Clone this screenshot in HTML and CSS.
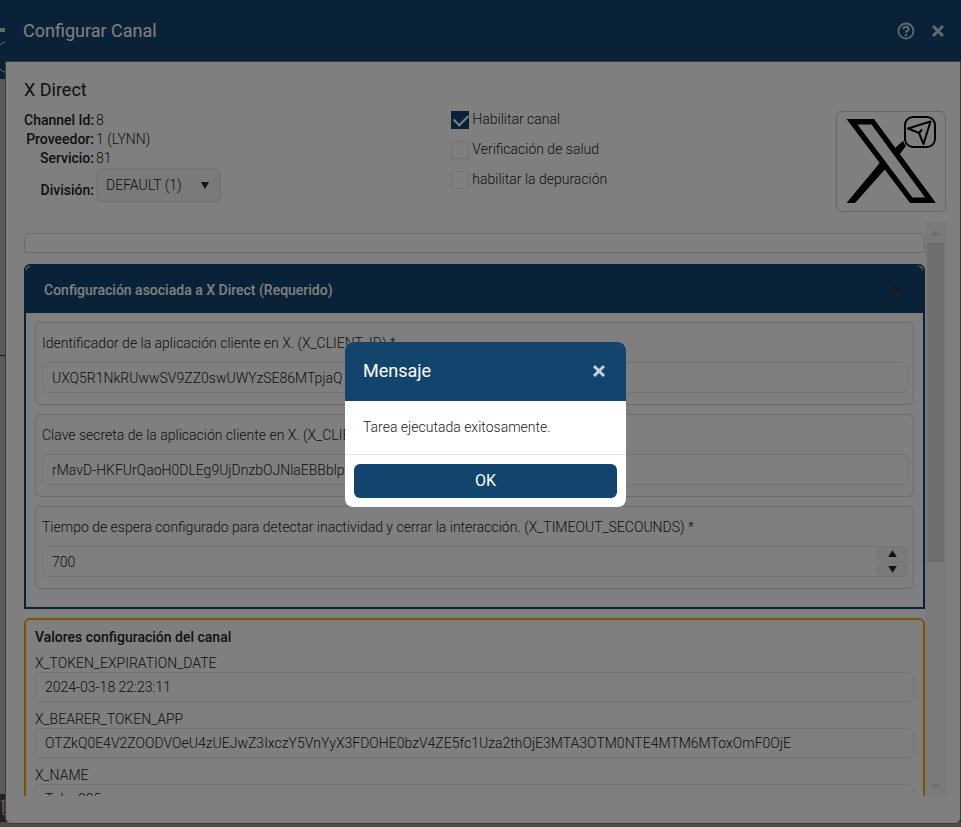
FILE: index.html
```html
<!DOCTYPE html>
<html lang="es">
<head>
    <meta charset="utf-8">
    <title>Configurar Canal</title>
    <link rel="stylesheet" href="styles.css">
</head>
<body>
<div class="app">
    <div class="app-header">
        <svg class="app-logo" width="5" height="60" viewBox="0 0 5 60">
            <path d="M0 10H5" stroke="#ccc" stroke-width="4"/>
            <path d="M0 25Q2 22 5 22M0 49Q2 52 5 52" stroke="#ccc" fill="none"/>
        </svg>
    </div>
    <div class="app-side"></div>
    <div class="app-main"></div>
    <div class="app-footer">
        <svg width="5" height="28" viewBox="0 0 5 28">
            <path d="M1 7H5M3 7V18Q3 21 5 21" stroke="#fff" stroke-width="1" fill="none"/>
            <path d="M4.500 9V18" stroke="#a86a5a" fill="none"/>
        </svg>
    </div>
</div>

<div class="window">
    <div class="window-header">
        <h1>Configurar Canal</h1>
        <div class="window-actions">
            <button type="button" class="icon-btn" aria-label="Ayuda">
                <svg width="18" height="18" viewBox="0 0 18 18" fill="none" stroke="currentColor">
                    <circle cx="9" cy="9" r="7.500" stroke-width="1.800"/>
                    <path d="M6.500 7.200C6.500 4 11.600 4 11.600 7C11.600 8.900 9 8.800 9 10.800" stroke-width="2.200"/>
                    <path d="M9 12V14" stroke-width="2.400"/>
                </svg>
            </button>
            <button type="button" class="icon-btn" aria-label="Cerrar">
                <svg width="14" height="14" viewBox="0 0 14 14" stroke="currentColor" stroke-width="3">
                    <path d="M2 2L12 12M12 2L2 12"/>
                </svg>
            </button>
        </div>
    </div>
    <div class="window-body">
        <h2>X Direct</h2>
        <div class="summary">
            <dl class="details">
                <dt>Channel Id:</dt><dd>8</dd>
                <dt>Proveedor:</dt><dd>1 (LYNN)</dd>
                <dt>Servicio:</dt><dd>81</dd>
                <dt class="tall"><label for="division">División:</label></dt>
                <dd class="select-wrap">
                    <select id="division"><option>DEFAULT (1)</option></select>
                </dd>
            </dl>
            <div class="checks">
                <div><input type="checkbox" id="check-enable" checked><label for="check-enable">Habilitar canal</label></div>
                <div><input type="checkbox" id="check-health"><label for="check-health">Verificación de salud</label></div>
                <div><input type="checkbox" id="check-debug"><label for="check-debug">habilitar la depuración</label></div>
            </div>
            <div class="channel-logo">
                <svg width="108" height="99" viewBox="0 0 108 99" fill="none" stroke="#000">
                    <path d="M9.500 7H37L99 91H73Z M20.500 12.500L75.500 85.500H88L34.500 12.500Z" fill="#000" fill-rule="evenodd" stroke="none"/>
                    <path d="M46 47L51 54L18 91H9.500Z M58 36L66 29L69 34L62 43Z" fill="#000" stroke="none"/>
                    <rect x="68" y="5" width="30" height="30" rx="8" stroke-width="2"/>
                    <path d="M93.500 9.500L71 16.500L82 21L86.500 32Z M82 21L85 17.500" stroke-width="2" stroke-linejoin="round"/>
                </svg>
            </div>
        </div>

        <div class="scroller">
            <div class="scroll-content">
                <div class="collapsed"></div>

                <section class="panel panel-required">
                    <header>
                        <h3>Configuración asociada a X Direct (Requerido)</h3>
                        <svg width="12" height="8" viewBox="0 0 12 8" fill="none" stroke="#333" stroke-width="2"><path d="M1 7L6 2L11 7"/></svg>
                    </header>
                    <div class="panel-body">
                        <div class="field">
                            <label for="client-id">Identificador de la aplicación cliente en X. (X_CLIENT_ID) *</label>
                            <input type="text" id="client-id" value="UXQ5R1NkRUwwSV9ZZ0swUWYzSE86MTpjaQ">
                        </div>
                        <div class="field">
                            <label for="client-secret">Clave secreta de la aplicación cliente en X. (X_CLIENT_SECRET) *</label>
                            <input type="text" id="client-secret" value="rMavD-HKFUrQaoH0DLEg9UjDnzbOJNlaEBBblpTz">
                        </div>
                        <div class="field">
                            <label for="timeout">Tiempo de espera configurado para detectar inactividad y cerrar la interacción. (X_TIMEOUT_SECOUNDS) *</label>
                            <div class="spinner">
                                <input type="text" inputmode="numeric" id="timeout" value="700">
                                <div class="spinner-buttons">
                                    <button type="button" class="up" aria-label="Aumentar"></button>
                                    <button type="button" class="down" aria-label="Disminuir"></button>
                                </div>
                            </div>
                        </div>
                    </div>
                </section>

                <section class="panel panel-values">
                    <h3>Valores configuración del canal</h3>
                    <div class="value">
                        <label for="token-date">X_TOKEN_EXPIRATION_DATE</label>
                        <input type="text" id="token-date" value="2024-03-18 22:23:11">
                    </div>
                    <div class="value">
                        <label for="bearer">X_BEARER_TOKEN_APP</label>
                        <input type="text" id="bearer" value="OTZkQ0E4V2ZOODVOeU4zUEJwZ3IxczY5VnYyX3FDOHE0bzV4ZE5fc1Uza2thOjE3MTA3OTM0NTE4MTM6MToxOmF0OjE">
                    </div>
                    <div class="value">
                        <label for="name">X_NAME</label>
                        <input type="text" id="name" value="Toke 005">
                    </div>
                </section>
            </div>
            <div class="scrollbar" aria-hidden="true">
                <span class="arrow arrow-up"></span>
                <div class="track"><div class="thumb"></div></div>
                <span class="arrow arrow-down"></span>
            </div>
        </div>
    </div>
</div>

<div class="overlay">
    <div class="message" role="dialog" aria-labelledby="message-title">
        <div class="message-header">
            <h2 id="message-title">Mensaje</h2>
            <button type="button" class="icon-btn" aria-label="Cerrar">
                <svg width="14" height="14" viewBox="0 0 14 14" stroke="currentColor" stroke-width="3">
                    <path d="M2 2L12 12M12 2L2 12"/>
                </svg>
            </button>
        </div>
        <p>Tarea ejecutada exitosamente.</p>
        <div class="message-footer">
            <button type="button" class="btn-ok">OK</button>
        </div>
    </div>
</div>
</body>
</html>
```

FILE: styles.css
```css
* {
    box-sizing: border-box;
    margin: 0;
    padding: 0;
}
html, body {
    height: 100%;
    overflow: hidden;
}
body {
    font-family: Roboto, "Liberation Sans", sans-serif;
    font-size: 14px;
    font-weight: 300;
    line-height: 18px;
    color: #222;
}
h1, h2 {
    font-size: 18px;
    line-height: 22px;
    font-weight: 400;
}
h3 {
    font-size: 14px;
    line-height: 18px;
    font-weight: 500;
}
input, select, button {
    font: inherit;
    color: inherit;
}
svg {
    display: block;
}

/* page behind the windows */
.app {
    height: 100%;
    display: flex;
    flex-direction: column;
    background: #aaa;
}
.app-header {
    height: 79px;
    padding-top: 20px;
    background: #12446e;
}
.app-side {
    height: 277px;
    background: #b0b0b0;
    border-bottom: 1px solid #333;
}
.app-main {
    flex: 1;
    background: #b8b8b8;
}
.app-footer {
    height: 33px;
    background: #444;
    border-bottom: 5px solid #999;
}

/* channel window */
.window {
    position: fixed;
    top: 0;
    right: 0;
    bottom: 3px;
    left: 5px;
    display: flex;
    flex-direction: column;
}
.window-header {
    display: flex;
    align-items: center;
    justify-content: space-between;
    height: 61px;
    padding: 0 16px 0 18px;
    background: #12446e;
    color: #fff;
}
.window-actions {
    display: flex;
    align-items: center;
    gap: 16px;
}
.icon-btn {
    border: 0;
    background: none;
    color: #c3d0dc;
}
.window-body {
    flex: 1;
    min-height: 0;
    display: flex;
    flex-direction: column;
    padding: 17px 14px 27px 18px;
    background: #fff;
    border: 1px solid #777;
    border-radius: 0 0 6px 6px;
}
.summary {
    display: grid;
    grid-template-columns: 10fr 9fr 110px;
    margin-top: 10px;
}
.details {
    display: grid;
    grid-template-columns: 70px 1fr;
    column-gap: 2px;
    line-height: 19px;
    align-content: start;
}
.details dt {
    text-align: right;
    white-space: nowrap;
    font-weight: 500;
}
.details .tall {
    padding-top: 13px;
}
.select-wrap {
    position: relative;
    width: 125px;
}
.select-wrap select {
    appearance: none;
    width: 100%;
    height: 34px;
    padding: 0 9px;
    background: #f4f4f4;
    border: 1px solid #e4e4e4;
    border-radius: 6px;
}
.select-wrap::after {
    content: "";
    position: absolute;
    top: 14px;
    right: 12px;
    border: 4px solid transparent;
    border-top: 7px solid #222;
    border-bottom: 0;
}
.checks {
    display: flex;
    flex-direction: column;
    gap: 12px;
}
.checks div {
    display: flex;
    gap: 3px;
    height: 18px;
}
.checks label {
    line-height: 16px;
}
.checks input {
    appearance: none;
    width: 18px;
    height: 18px;
    border: 1px solid #e6e6e6;
}
.checks input:checked {
    background: #12446e;
    border-color: #12446e;
}
.checks input:checked::before {
    content: "";
    display: block;
    width: 12px;
    height: 7px;
    margin: 2px;
    border: solid #fff;
    border-width: 0 0 2px 2px;
    transform: rotate(-45deg);
}
.channel-logo {
    align-self: start;
    border: 1px solid #ccc;
    border-radius: 6px;
}
.scroller {
    flex: 1;
    min-height: 0;
    display: flex;
    margin-top: 10px;
    overflow: hidden;
}
.scroll-content {
    flex: 1;
    display: flex;
    flex-direction: column;
    gap: 9px;
    padding-top: 11px;
}
.collapsed {
    flex: none;
    height: 20px;
    margin-bottom: 2px;
    border: 1px solid #d8d8d8;
    border-radius: 6px 6px 0 0;
}
.scrollbar {
    display: flex;
    flex-direction: column;
    width: 21px;
    background: #f4f4f4;
}
.track {
    flex: 1;
    padding: 0 2px;
}
.thumb {
    height: 60%;
    background: #dcdcdc;
}
.arrow {
    width: 10px;
    height: 5px;
    margin: 9px auto 7px;
    background: #dcdcdc;
}
.arrow-up {
    clip-path: polygon(50% 0, 100% 100%, 0 100%);
}
.arrow-down {
    clip-path: polygon(0 0, 100% 0, 50% 100%);
}

.panel {
    flex: none;
    border: 2px solid #12446e;
    border-radius: 6px 6px 0 0;
}
.panel-required header {
    display: flex;
    align-items: center;
    justify-content: space-between;
    height: 47px;
    padding: 0 22px 0 18px;
    background: #12446e;
    border-radius: 6px 6px 0 0;
    color: #fff;
}
.panel-body {
    display: flex;
    flex-direction: column;
    gap: 9px;
    padding: 9px 9px 18px;
}
.field {
    display: flex;
    flex-direction: column;
    gap: 9px;
    padding: 10px 5px 11px 6px;
    border: 1px solid #d8d8d8;
    border-radius: 6px;
}
.field label {
    line-height: 20px;
}
.field input, .value input {
    width: 100%;
    height: 31px;
    padding: 0 9px;
    background: #fff;
    border: 1px solid #ebebeb;
    border-radius: 6px;
}
.field .spinner {
    display: flex;
    border: 1px solid #ebebeb;
    border-radius: 6px;
}
.field .spinner input {
    height: 29px;
    border: 0;
}
.spinner-buttons {
    display: flex;
    flex-direction: column;
    flex: none;
    width: 31px;
    margin: -1px -1px -1px 0;
}
.spinner-buttons button {
    flex: 1;
    background: #f4f4f4;
    border: 1px solid #ebebeb;
    border-radius: 6px;
}
.spinner-buttons button::before {
    content: "";
    display: block;
    width: 9px;
    height: 7px;
    margin: 0 auto;
    background: #222;
}
.spinner-buttons .up::before {
    clip-path: polygon(50% 0, 100% 100%, 0 100%);
}
.spinner-buttons .down::before {
    clip-path: polygon(0 0, 100% 0, 50% 100%);
}
.panel-values {
    display: flex;
    flex-direction: column;
    gap: 8px;
    padding: 8px 9px;
    border-color: #ffa500;
}
.value {
    display: flex;
    flex-direction: column;
}
.value input {
    height: 30px;
}

/* message box */
.overlay {
    position: fixed;
    inset: 0;
    display: flex;
    align-items: center;
    justify-content: center;
    padding: 22px 0 0 10px;
    background: rgba(0, 0, 0, .5);
}
.message {
    width: 281px;
    overflow: hidden;
    background: #fff;
    border-radius: 8px;
}
.message-header {
    display: flex;
    align-items: center;
    justify-content: space-between;
    height: 59px;
    padding: 0 20px 2px 18px;
    background: #12446e;
    color: #fff;
}
.message p {
    padding: 17px 18px 18px;
}
.message-footer {
    padding: 9px;
    border-top: 1px solid #e6e6e6;
}
.btn-ok {
    display: block;
    width: 100%;
    height: 34px;
    background: #12446e;
    border: 0;
    border-radius: 6px;
    color: #fff;
    font-size: 16px;
    font-weight: 400;
}
```
